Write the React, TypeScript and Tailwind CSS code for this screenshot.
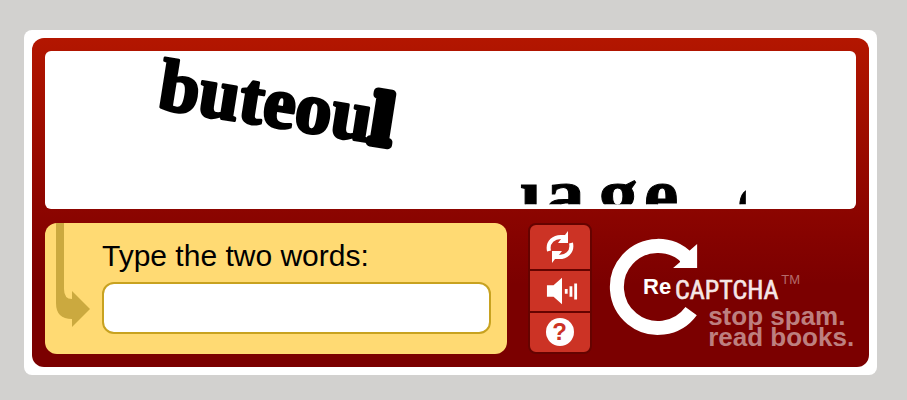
import { useState } from 'react';

function ChallengeImage() {
  return (
    <div className="overflow-hidden rounded-md bg-white">
      <svg
        viewBox="0 0 810 158"
        className="block w-full"
        role="img"
        aria-label="Challenge words"
        fontFamily="'Liberation Serif', serif"
        fontWeight="bold"
      >
        <defs>
          <clipPath id="scan">
            <rect x="0" y="0" width="700" height="153" />
          </clipPath>
        </defs>
        <g fontSize="73" stroke="#000" strokeLinejoin="round">
          <text x="111" y="57" strokeWidth="3" transform="rotate(9 111 57)">
            buteou<tspan strokeWidth="9">l</tspan>
          </text>
        </g>
        {/* second word runs off the bottom of the scan */}
        <g fontSize="78" stroke="#000" strokeWidth="1" clipPath="url(#scan)">
          <text x="474" y="170">ı</text>
          <text x="500" y="170">a</text>
          <text x="553" y="170">g</text>
          <text x="598" y="170">e</text>
          <text x="691" y="174">o</text>
        </g>
      </svg>
    </div>
  );
}

function Logo() {
  return (
    <svg
      viewBox="0 0 248 131"
      className="min-w-0 flex-1"
      fontFamily="'Liberation Sans', Arial, sans-serif"
      role="img"
      aria-label="reCAPTCHA"
    >
      <path
        d="M83 88 A41 41 0 1 1 79 35"
        fill="none"
        stroke="#fff"
        strokeWidth="14"
      />
      <path d="M89 21 V45 H65 L72 39 L71 34 L81 28 Z" fill="#fff" />
      <text x="35" y="71" fontSize="22" fontWeight="bold" fill="#fff">
        Re
      </text>
      <text
        x="67"
        y="76"
        fontSize="26"
        fill="#f6e6e6"
        stroke="#f6e6e6"
        strokeWidth="0.6"
        fontFamily="'Liberation Sans Narrow', 'Roboto Condensed', 'Liberation Sans', sans-serif"
      >
        CAPTCHA
      </text>
      <text x="173" y="61" fontSize="13" fill="#b56b6b">
        TM
      </text>
      <g fontSize="26" fontWeight="bold" fill="#bd7f7f">
        <text x="100" y="102">stop spam.</text>
        <text x="100" y="123">read books.</text>
      </g>
    </svg>
  );
}

function Controls() {
  return (
    <div className="flex w-16 flex-col divide-y-2 divide-[#650300] overflow-hidden rounded-lg border-2 border-[#650300] bg-[#cc3325]">
      <button type="button" aria-label="Get a new challenge" className="flex flex-[11] items-center justify-center">
        <svg viewBox="0 0 28 32" className="h-8 w-7" fill="#fff">
          <g fill="none" stroke="#fff" strokeWidth="4">
            <path d="M3 20 C1 11 8 5 17 6" />
            <path d="M25 12 C27 21 20 27 11 26" />
          </g>
          <path d="M22 0 V12 H12 L15 8 L14 4 L19 4 Z" />
          <path d="M6 32 V20 H16 L13 24 L14 28 L9 28 Z" />
        </svg>
      </button>
      <button type="button" aria-label="Get an audio challenge" className="flex flex-10 items-center justify-center pl-1">
        <svg viewBox="0 0 34 28" className="h-7 w-8" fill="#fff">
          <path d="M1 8 H8 L17 0 V28 L8 20 H1 Z" />
          <path d="M20 12 h3 v5 h-3 Z M25 9 h3 v11 h-3 Z M30 6 h3 v17 h-3 Z" />
        </svg>
      </button>
      <button type="button" aria-label="Help" className="flex flex-10 items-center justify-center">
        <span className="flex size-7 items-center justify-center rounded-full bg-white text-2xl leading-none font-bold text-[#cc3325]">
          ?
        </span>
      </button>
    </div>
  );
}

export default function App() {
  const [answer, setAnswer] = useState('');

  return (
    <main className="min-h-screen bg-[#d2d1cf] pt-[30px] pr-[30px] pb-6 pl-6 font-['Liberation_Sans',Arial,sans-serif]">
      <div className="rounded-lg bg-white p-2">
        <div className="flex flex-col gap-3.5 rounded-xl bg-linear-to-b from-[#b31600] via-[#8a0400] via-55% to-[#7b0000] to-75% p-[13px]">
          <ChallengeImage />

          <div className="flex">
            <div className="flex min-w-0 flex-[462] gap-3 rounded-xl bg-[#ffda73] pr-4 pl-[11px]">
              <svg viewBox="0 0 34 131" className="w-[34px] shrink-0" fill="#cba93f">
                <path d="M0 0 H8 V66 Q8 76 16 76 V68 L34 86 L16 104 V96 Q0 96 0 80 Z" />
              </svg>
              <div className="flex min-w-0 flex-1 flex-col gap-2 pt-[15px] pb-5">
                <label htmlFor="answer" className="text-[30px] leading-9 text-black">
                  Type the two words:
                </label>
                <input
                  id="answer"
                  type="text"
                  value={answer}
                  autoComplete="off"
                  onChange={(e) => setAnswer(e.target.value)}
                  className="h-[52px] w-full rounded-xl border-2 border-[#c8a220] bg-white px-3 text-2xl outline-none"
                />
              </div>
            </div>

            <div className="flex min-w-0 flex-[349] gap-4 pl-[21px]">
              <Controls />
              <Logo />
            </div>
          </div>
        </div>
      </div>
    </main>
  );
}
